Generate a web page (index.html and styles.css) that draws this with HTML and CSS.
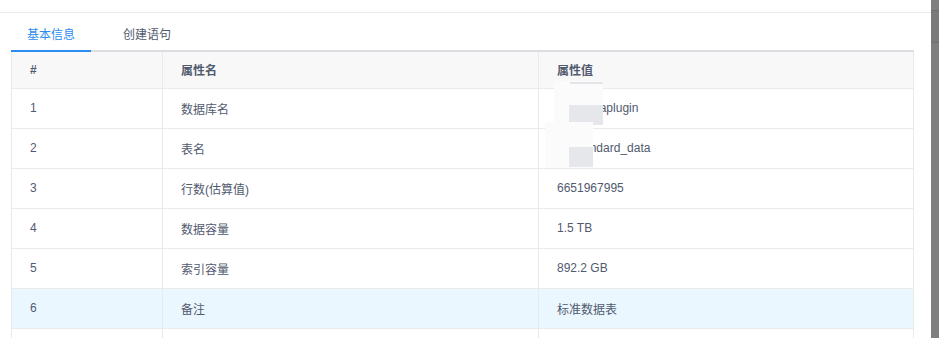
FILE: index.html
```html
<!DOCTYPE html>
<html lang="zh-CN">

<head>
  <meta charset="UTF-8" />
  <title>表信息</title>
  <link rel="stylesheet" href="styles.css">
</head>

<body>
  <div class="page">
    <div class="content">
      <div class="top-strip"></div>

      <div class="tabs">
        <div class="tab active">基本信息</div>
        <div class="tab">创建语句</div>
      </div>

      <table class="info-table">
        <colgroup>
          <col class="col-index">
          <col class="col-name">
          <col>
        </colgroup>
        <thead>
          <tr>
            <th>#</th>
            <th>属性名</th>
            <th>属性值</th>
          </tr>
        </thead>
        <tbody>
          <tr>
            <td>1</td>
            <td>数据库名</td>
            <td class="value">test_dataplugin
              <span class="mask mask-db"><i class="mask-line"></i><i class="mask-block"></i></span>
            </td>
          </tr>
          <tr>
            <td>2</td>
            <td>表名</td>
            <td class="value">tb_standard_data
              <span class="mask mask-table"><i class="mask-block"></i></span>
            </td>
          </tr>
          <tr>
            <td>3</td>
            <td>行数(估算值)</td>
            <td>6651967995</td>
          </tr>
          <tr>
            <td>4</td>
            <td>数据容量</td>
            <td>1.5 TB</td>
          </tr>
          <tr>
            <td>5</td>
            <td>索引容量</td>
            <td>892.2 GB</td>
          </tr>
          <tr class="current">
            <td>6</td>
            <td>备注</td>
            <td>标准数据表</td>
          </tr>
          <tr>
            <td></td>
            <td></td>
            <td></td>
          </tr>
        </tbody>
      </table>
    </div>

    <div class="scrollbar">
      <div class="scroll-thumb"></div>
    </div>
  </div>
</body>

</html>
```

FILE: styles.css
```css
* {
  box-sizing: border-box;
  margin: 0;
  padding: 0;
}

html, body {
  height: 100%;
  overflow: hidden;
}

body {
  font-family: 'Liberation Sans', 'Noto Sans CJK SC', sans-serif;
  font-size: 12px;
  color: #515a6e;
  background: #fff;
}

.page {
  display: flex;
  height: 100%;
}

.content {
  flex: 1;
  min-width: 0;
}

.top-strip {
  height: 13px;
  border-bottom: 1px solid #e8eaec;
}

/* tabs */
.tabs {
  display: flex;
  gap: 16px;
  margin: 8px 0 0 11px;
  width: 903px;
  border-bottom: 2px solid #dcdee2;
}

.tab {
  padding: 8px 16px;
  font-size: 12px;
  line-height: 13px;
  color: #515a6e;
  margin-bottom: -2px;
  border-bottom: 2px solid transparent;
}

.tab.active {
  color: #2d8cf0;
  border-bottom-color: #2d8cf0;
}

/* table */
.info-table {
  margin-left: 11px;
  width: 903px;
  border-collapse: collapse;
  table-layout: fixed;
  border-left: 1px solid #e8eaec;
  border-right: 1px solid #e8eaec;
}

.col-index {
  width: 151px;
}

.col-name {
  width: 376px;
}

.info-table th,
.info-table td {
  text-align: left;
  padding: 0 18px;
  border-bottom: 1px solid #e8eaec;
  border-right: 1px solid #e8eaec;
  white-space: nowrap;
}

.info-table th {
  height: 36px;
  background: #f8f8f9;
  font-weight: bold;
  color: #515a6e;
}

.info-table td {
  height: 40px;
}

.info-table tr.current td {
  background: #ebf7ff;
}

/* blurred-out values */
.value {
  position: relative;
}

.mask {
  position: absolute;
  background: #fbfbfb;
}

.mask-db {
  left: 15px;
  top: -8px;
  width: 49px;
  height: 44px;
}

.mask-table {
  left: 6px;
  top: -7px;
  width: 48px;
  height: 46px;
}

.mask-line {
  position: absolute;
  left: 16px;
  top: 1px;
  width: 33px;
  height: 2px;
  background: #e4e5e8;
}

.mask-block {
  position: absolute;
  right: 0;
  bottom: 0;
  width: 34px;
  height: 20px;
  background: #e6e7ea;
}

.mask-table .mask-block {
  width: 24px;
  height: 20px;
  bottom: 1px;
}

/* fake window scrollbar */
.scrollbar {
  width: 8px;
  background: #7f7f7f;
  padding-top: 10px;
}

.scroll-thumb {
  height: 33px;
  border-top: 1px solid #727272;
  border-bottom: 1px solid #727272;
  background: #7a7a7a;
}
```
